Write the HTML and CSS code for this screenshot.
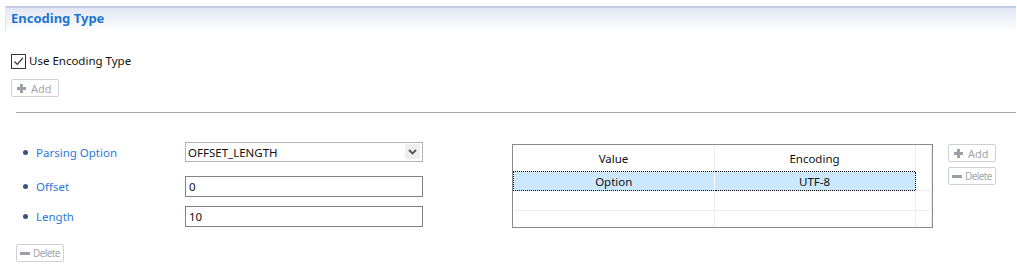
FILE: index.html
```html
<!DOCTYPE html>
<html lang="en">
<head>
  <meta charset="UTF-8">
  <title>Encoding Type</title>
  <link rel="stylesheet" href="styles.css">
</head>
<body>
  <div class="panel-title">
    <h1>Encoding Type</h1>
  </div>

  <div class="top-section">
    <label class="check">
      <span class="check-box">
        <svg width="11" height="11" viewBox="0 0 11 11"><path d="M1.5 5.5 L4.3 8.3 L9.8 2" fill="none" stroke="#333" stroke-width="1.2"/></svg>
      </span>
      Use Encoding Type
    </label>
    <button type="button" class="btn btn-add">
      <svg class="ico" width="9" height="9" viewBox="0 0 9 9"><path d="M3 0h3v3h3v3H6v3H3V6H0V3h3z" fill="#9aa0a6"/></svg>
      Add
    </button>
  </div>

  <hr class="divider">

  <div class="detail">
    <div class="fields">
      <div class="field field-option">
        <span class="bullet"></span>
        <span class="field-label">Parsing Option</span>
        <div class="select-wrap">
          <select class="select">
            <option>OFFSET_LENGTH</option>
          </select>
          <span class="select-arrow">
            <svg width="9" height="6" viewBox="0 0 9 6"><path d="M1 1 L4.5 4.5 L8 1" fill="none" stroke="#555" stroke-width="1.8"/></svg>
          </span>
        </div>
      </div>
      <div class="field field-offset">
        <span class="bullet"></span>
        <span class="field-label">Offset</span>
        <input type="text" class="text-input" value="0">
      </div>
      <div class="field field-length">
        <span class="bullet"></span>
        <span class="field-label">Length</span>
        <input type="text" class="text-input" value="10">
      </div>
      <button type="button" class="btn btn-delete btn-delete-bottom">
        <svg class="ico" width="10" height="3" viewBox="0 0 10 3"><rect width="10" height="3" fill="#9aa0a6"/></svg>
        Delete
      </button>
    </div>

    <div class="grid-box">
      <table class="grid">
        <thead>
          <tr>
            <th class="col-value">Value</th>
            <th class="col-enc">Encoding</th>
            <th class="col-fill"></th>
          </tr>
        </thead>
        <tbody>
          <tr class="selected">
            <td class="sel-cell sel-first">Option</td>
            <td class="sel-cell sel-last">UTF-8</td>
            <td></td>
          </tr>
          <tr><td></td><td></td><td></td></tr>
          <tr><td></td><td></td><td></td></tr>
        </tbody>
      </table>
    </div>

    <div class="side-buttons">
      <button type="button" class="btn btn-add">
        <svg class="ico" width="9" height="9" viewBox="0 0 9 9"><path d="M3 0h3v3h3v3H6v3H3V6H0V3h3z" fill="#9aa0a6"/></svg>
        Add
      </button>
      <button type="button" class="btn btn-delete">
        <svg class="ico" width="10" height="3" viewBox="0 0 10 3"><rect width="10" height="3" fill="#9aa0a6"/></svg>
        Delete
      </button>
    </div>
  </div>
</body>
</html>
```
FILE: styles.css
```css
/* Reset */
body, h1, hr, button, input, select, table, div { margin: 0; padding: 0; box-sizing: border-box; }

body {
  font-family: "Noto Sans", "Liberation Sans", Arial, sans-serif;
  font-size: 11.5px;
  color: #222;
  background: #ffffff;
  width: 1017px;
  height: 275px;
  overflow: hidden;
}

/* Title bar */
.panel-title {
  margin: 6px 1px 0 5px;
  height: 26px;
  border-top: 2px solid #c3cde3;
  border-left: 1px solid #e3e8f2;
  background: linear-gradient(to bottom, #e2e7f4, #ffffff);
  padding-left: 5px;
}

.panel-title h1 {
  font-size: 13px;
  font-weight: bold;
  color: #1e74d2;
  line-height: 18px;
  padding-top: 1px;
}

/* Checkbox + add */
.top-section {
  padding: 22px 0 0 11px;
  display: flex;
  flex-direction: column;
  align-items: flex-start;
}

.check {
  display: flex;
  align-items: center;
  gap: 3px;
  height: 14px;
  line-height: 14px;
  color: #111;
}

.check-box {
  width: 13px;
  height: 13px;
  border: 1px solid #333;
  display: flex;
  align-items: center;
  justify-content: center;
  background: #fff;
}

.btn {
  display: inline-flex;
  align-items: center;
  gap: 5px;
  height: 18px;
  padding: 0 6px 0 5px;
  background: #ffffff;
  border: 1px solid #cdd1d6;
  border-radius: 2px;
  color: #a3a7ab;
  font-family: inherit;
  font-size: 11px;
  cursor: pointer;
}

.top-section .btn-add {
  margin-top: 11px;
}

.btn-add { width: 48px; }

.btn-delete {
  width: 48px;
  gap: 3px;
  padding: 0 3px;
  font-size: 10px;
  letter-spacing: -0.6px;
}

.divider {
  border: none;
  border-top: 1px solid #a8a8a8;
  margin: 15px 1px 0 16px;
  height: 0;
}

/* Lower area */
.detail {
  display: flex;
  align-items: flex-start;
  padding-top: 29px;
}

.fields {
  width: 423px;
  flex-shrink: 0;
  display: flex;
  flex-direction: column;
  padding-left: 23px;
}

.field {
  display: flex;
  align-items: center;
  height: 21px;
}

.field-option { height: 20px; }
.field-offset { margin-top: 14px; }
.field-length { margin-top: 9px; }

.bullet {
  width: 5px;
  height: 5px;
  border-radius: 50%;
  background: #36557e;
  margin-right: 8px;
}

.field-label {
  width: 149px;
  color: #2a7ad8;
}

.select-wrap {
  position: relative;
  width: 238px;
  height: 20px;
}

.select {
  width: 100%;
  height: 20px;
  appearance: none;
  -webkit-appearance: none;
  border: 1px solid #b4b4b4;
  background: #fff;
  padding-left: 2px;
  font-family: inherit;
  font-size: 11.5px;
  color: #111;
  border-radius: 0;
}

.select-arrow {
  position: absolute;
  top: 2px;
  right: 3px;
  width: 15px;
  height: 15px;
  background: #eeeeee;
  display: flex;
  align-items: center;
  justify-content: center;
  pointer-events: none;
}

.text-input {
  width: 238px;
  height: 21px;
  border: 1px solid #828282;
  padding-left: 3px;
  font-family: inherit;
  font-size: 11.5px;
  color: #111;
}

.btn-delete-bottom {
  margin: 17px 0 0 -7px;
}

/* Table */
.grid-box {
  margin-left: 89px;
  margin-top: 2px;
  width: 421px;
  height: 84px;
  border: 1px solid #8a8a8a;
  overflow: hidden;
  flex-shrink: 0;
}

.grid {
  border-collapse: collapse;
  width: 419px;
  table-layout: fixed;
}

.grid th, .grid td {
  padding: 0;
  text-align: center;
  font-weight: normal;
  color: #111;
  border-right: 1px solid #e9eef4;
}

.grid th {
  height: 25px;
  padding-top: 1px;
}

.grid td {
  height: 19px;
  border-bottom: 1px solid #eeeeee;
}

.col-value { width: 200px; }
.col-enc { width: 200px; }

.grid tr.selected td {
  height: 18px;
}

.grid td.sel-cell {
  background: #cce8ff;
  border-top: 1px dotted #000;
  border-bottom: 1px dotted #000;
  border-right: 1px solid #ffffff;
}

.grid td.sel-first {
  border-left: 1px dotted #000;
}

.grid td.sel-last {
  border-right: 1px dotted #000;
}

.side-buttons {
  margin-left: 15px;
  margin-top: 2px;
  display: flex;
  flex-direction: column;
  gap: 5px;
}
```
